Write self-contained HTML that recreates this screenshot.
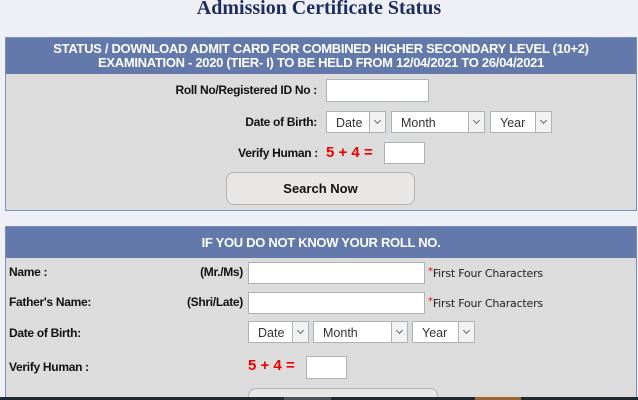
<!DOCTYPE html>
<html style="width:638px;height:400px;overflow:hidden"><head><style>
*{box-sizing:border-box;margin:0;padding:0}
body{width:638px;height:400px;background:#eef0f5;font-family:"Liberation Sans",Arial,sans-serif;position:relative;overflow:hidden}
.a{position:absolute}
h1{position:absolute;top:-3px;left:0;width:638px;text-align:center;font:bold 20px "Liberation Serif",serif;color:#1d2d5c}
.panel{position:absolute;left:5px;width:632px;background:#dcdcdc;border:1px solid #7b8fbf}
.hd{background:#6379ab;color:#fff;text-align:center;font-size:13px;font-weight:bold;letter-spacing:-0.3px}
.lbl{position:absolute;font-size:12px;font-weight:bold;color:#111;letter-spacing:-0.3px}
.inp{position:absolute;background:#fff;border:1px solid #a9b3b8}
.sel{position:absolute;background:#fff;border:1px solid #a9b3b8;font-size:12.5px;color:#333;padding:4px 0 0 9px;height:22px}
.sel i{position:absolute;right:0;top:0;width:16px;height:20px;border-left:1px solid #a9b3b8;background:#f2f2f2}
.sel i:after{content:"";position:absolute;left:5px;top:6px;width:4px;height:4px;border-right:1px solid #666;border-bottom:1px solid #666;transform:rotate(45deg)}
.red{position:absolute;color:#e00;font-weight:bold;font-size:15px}
.btn{position:absolute;background:#e9e6e6;border:1px solid #b0b4b6;border-radius:8px;text-align:center;font-weight:bold;font-size:13px;color:#111}
.note{position:absolute;font-size:11px;color:#222;font-family:"DejaVu Sans",sans-serif;letter-spacing:-0.2px}
.note b{color:#e00;font-weight:normal;vertical-align:3px;font-size:10px}
</style></head><body>
<h1>Admission Certificate Status</h1>
<div class="panel" style="top:37px;height:174px">
<div class="hd" style="height:36px;padding-top:4px;line-height:14px">STATUS / DOWNLOAD ADMIT CARD FOR COMBINED HIGHER SECONDARY LEVEL (10+2)<br>EXAMINATION - 2020 (TIER- I) TO BE HELD FROM 12/04/2021 TO 26/04/2021</div>
</div>
<div class="lbl" style="right:321px;top:83px">Roll No/Registered ID No :</div>
<div class="inp" style="left:326px;top:79px;width:103px;height:23px"></div>
<div class="lbl" style="right:321px;top:115px">Date of Birth:</div>
<div class="sel" style="left:326px;top:111px;width:60px">Date<i></i></div>
<div class="sel" style="left:391px;top:111px;width:94px">Month<i></i></div>
<div class="sel" style="left:490px;top:111px;width:62px">Year<i></i></div>
<div class="lbl" style="right:320px;top:146px">Verify Human :</div>
<div class="red" style="left:326px;top:144px">5 + 4 =</div>
<div class="inp" style="left:384px;top:142px;width:41px;height:22px"></div>
<div class="btn" style="left:226px;top:172px;width:189px;height:33px;line-height:31px">Search Now</div>

<div class="panel" style="top:226px;height:174px">
<div class="hd" style="height:31px;line-height:31px">IF YOU DO NOT KNOW YOUR ROLL NO.</div>
</div>
<div class="lbl" style="left:9px;top:265px">Name :</div>
<div class="lbl" style="right:395px;top:265px">(Mr./Ms)</div>
<div class="inp" style="left:248px;top:262px;width:177px;height:22px"></div>
<div class="note" style="left:428px;top:266px"><b>*</b>First Four Characters</div>
<div class="lbl" style="left:9px;top:295px">Father's Name:</div>
<div class="lbl" style="right:395px;top:295px">(Shri/Late)</div>
<div class="inp" style="left:248px;top:292px;width:177px;height:22px"></div>
<div class="note" style="left:428px;top:296px"><b>*</b>First Four Characters</div>
<div class="lbl" style="left:9px;top:326px">Date of Birth:</div>
<div class="sel" style="left:248px;top:321px;width:61px">Date<i></i></div>
<div class="sel" style="left:313px;top:321px;width:95px">Month<i></i></div>
<div class="sel" style="left:412px;top:321px;width:63px">Year<i></i></div>
<div class="lbl" style="left:9px;top:360px">Verify Human :</div>
<div class="red" style="left:248px;top:357px">5 + 4 =</div>
<div class="inp" style="left:306px;top:356px;width:41px;height:23px"></div>
<div class="btn" style="left:248px;top:388px;width:190px;height:12px;border-bottom:none;border-radius:8px 8px 0 0"></div>
<div class="a" style="left:0;top:397px;width:638px;height:3px;background:#1f2a33"></div>
<div class="a" style="left:284px;top:397px;width:47px;height:3px;background:#4a5358"></div>
<div class="a" style="left:475px;top:397px;width:46px;height:3px;background:#9a6434"></div>
</body></html>
